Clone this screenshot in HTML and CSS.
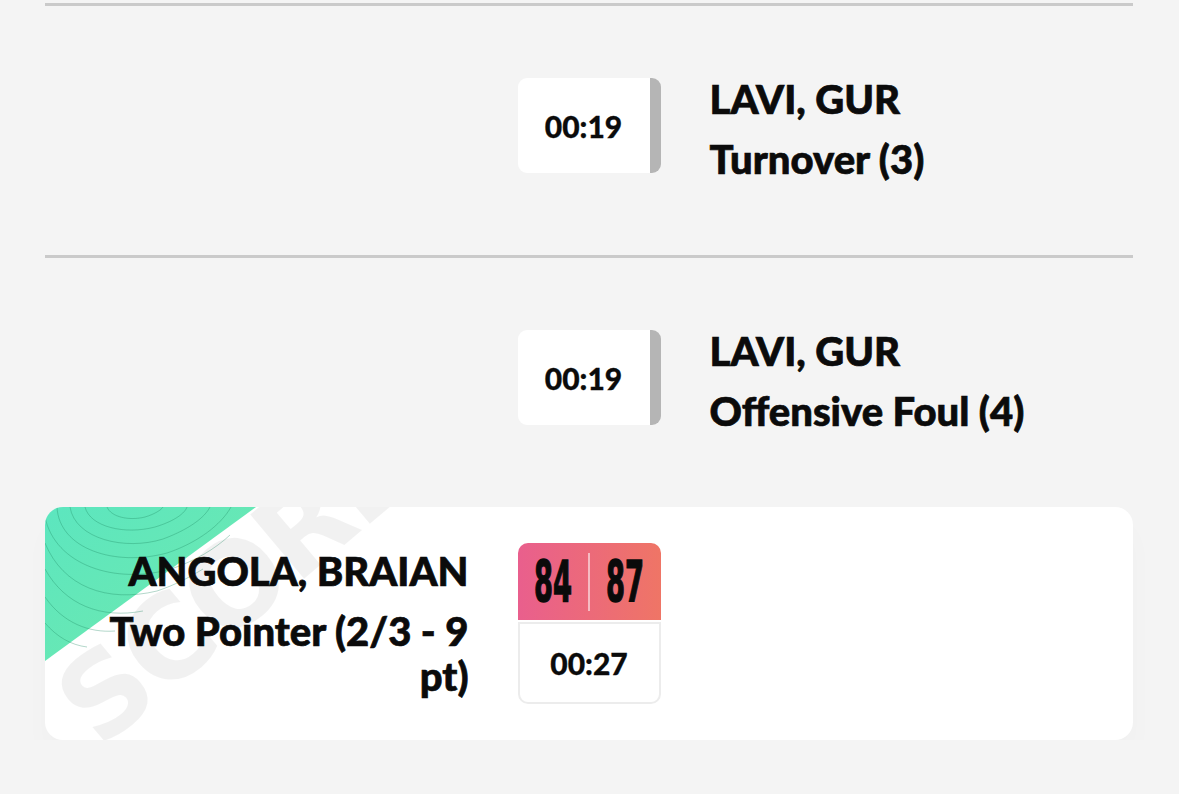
FILE: index.html
```html
<!DOCTYPE html>
<html lang="en">
<head>
<meta charset="utf-8">
<title>Play by play</title>
<link rel="stylesheet" href="styles.css">
</head>
<body>
<div class="feed">
  <div class="divider"></div>
  <div class="event">
    <div class="side side-left"></div>
    <div class="clock">00:19</div>
    <div class="side side-right">
      <p class="player">LAVI, GUR</p>
      <p class="action">Turnover (3)</p>
    </div>
  </div>
  <div class="divider"></div>
  <div class="event">
    <div class="side side-left"></div>
    <div class="clock">00:19</div>
    <div class="side side-right">
      <p class="player">LAVI, GUR</p>
      <p class="action">Offensive Foul (4)</p>
    </div>
  </div>
  <div class="score-card">
    <span class="watermark" aria-hidden="true">SCORE</span>
    <svg class="corner" width="212" height="155" viewBox="0 0 212 155" aria-hidden="true">
      <defs>
        <linearGradient id="g" x1="0" y1="0" x2="1" y2="1">
          <stop offset="0" stop-color="#5ce6bf"/>
          <stop offset="1" stop-color="#70e9ad"/>
        </linearGradient>
      </defs>
      <polygon points="0,0 211,0 0,154" fill="url(#g)"/>
      <g fill="none" stroke="#1f8a63" stroke-opacity="0.38" stroke-width="0.9">
        <path d="M62 0 C 66 10, 84 14, 100 10 C 110 7, 116 3, 118 0"/>
        <path d="M40 0 C 45 20, 80 28, 110 20 C 130 14, 140 6, 142 0"/>
        <path d="M25 0 C 30 32, 80 44, 118 32 C 145 22, 160 10, 165 0"/>
        <path d="M12 0 C 14 42, 70 60, 122 46 C 152 36, 176 18, 186 0"/>
        <path d="M0 10 C 10 58, 70 78, 126 62 C 150 54, 170 42, 185 28"/>
        <path d="M0 36 C 18 80, 62 96, 112 84 C 130 78, 145 70, 158 62"/>
        <path d="M0 62 C 20 98, 56 112, 98 104"/>
        <path d="M0 90 C 18 116, 44 126, 70 124"/>
        <path d="M0 116 C 12 130, 26 138, 42 140"/>
      </g>
    </svg>
    <div class="event event-score">
      <div class="side side-left">
        <p class="player">ANGOLA, BRAIAN</p>
        <p class="action">Two Pointer (2/3 - 9 pt)</p>
      </div>
      <div class="badge">
        <div class="badge-score">
          <span class="num">84</span>
          <span class="sep"></span>
          <span class="num">87</span>
        </div>
        <div class="badge-clock">00:27</div>
      </div>
      <div class="side side-right"></div>
    </div>
  </div>
</div>
</body>
</html>
```

FILE: styles.css
```css
* { box-sizing: border-box; }

html, body {
  margin: 0;
  padding: 0;
  background: #f4f4f4;
}

body {
  font-family: "Lato Black", Lato, "Open Sans", "DejaVu Sans", sans-serif;
  color: #0b0b0b;
  overflow: hidden;
}

.feed {
  padding: 3px 46px 0 45px;
}

.divider {
  height: 3px;
  background: #cacaca;
}

.event {
  display: grid;
  grid-template-columns: 1fr 143px 1fr;
  grid-auto-rows: 95px;
  column-gap: 49px;
  align-items: center;
  padding: 72px 0 82px;
}

.side p {
  margin: 0;
  font-weight: 900;
  font-size: 40px;
  line-height: 45px;
  -webkit-text-stroke: 0.7px #0b0b0b;
}

.side .player {
  margin-bottom: 15px;
}

.side-right {
  padding-top: 8px;
}

.side-left {
  text-align: right;
}

.clock {
  height: 95px;
  background: #ffffff;
  border-radius: 9px;
  border-right: 11px solid #b5b5b5;
  display: flex;
  align-items: center;
  justify-content: center;
  font-size: 30px;
  font-weight: 700;
  -webkit-text-stroke: 0.3px #0b0b0b;
}

.score-card {
  position: relative;
  overflow: hidden;
  background: #ffffff;
  border-radius: 18px;
  box-shadow: 0 20px 30px rgba(0, 0, 0, 0.02);
}

.corner {
  position: absolute;
  left: 0;
  top: 0;
  display: block;
}

.watermark {
  position: absolute;
  left: 55px;
  top: 146px;
  font-family: "DejaVu Sans", sans-serif;
  font-weight: 700;
  font-size: 115px;
  line-height: 1;
  letter-spacing: -3px;
  color: rgba(0, 0, 0, 0.055);
  transform-origin: 0 97px;
  transform: rotate(-40deg);
  white-space: nowrap;
}

.event-score {
  position: relative;
  grid-auto-rows: 161px;
  padding: 36px 0;
}

.event-score .action {
  max-width: 380px;
  margin-left: auto;
}

.badge {
  display: flex;
  flex-direction: column;
  gap: 2px;
}

.badge-score {
  height: 77px;
  border-radius: 10px 10px 0 0;
  background: linear-gradient(90deg, #e95f8d 0%, #ef7566 100%);
  display: flex;
  align-items: center;
  justify-content: center;
  gap: 10px;
}

.num {
  display: inline-block;
  font-family: "Liberation Sans Narrow", "DejaVu Sans Condensed", sans-serif;
  font-weight: 700;
  font-size: 40px;
  line-height: 1;
  color: #0a0a0a;
  transform: scale(0.76, 1.42);
  -webkit-text-stroke: 1px #0a0a0a;
}

.sep {
  width: 2px;
  height: 58px;
  background: rgba(255, 255, 255, 0.55);
}

.badge-clock {
  height: 82px;
  border: 2px solid #ececec;
  border-radius: 0 0 10px 10px;
  display: flex;
  align-items: center;
  justify-content: center;
  font-size: 30px;
  font-weight: 700;
  -webkit-text-stroke: 0.3px #0b0b0b;
}
```
